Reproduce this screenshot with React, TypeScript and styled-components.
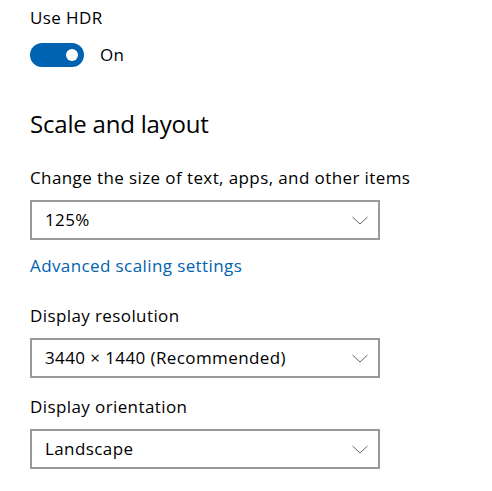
import React from "react";
import styled, { createGlobalStyle } from "styled-components";

const Global = createGlobalStyle`
  html, body { margin: 0; padding: 0; background: #ffffff; }
  body { font-family: "Open Sans", "Noto Sans", sans-serif; color: #000; }
`;

const Page = styled.div`
  display: flex;
  flex-direction: column;
  align-items: flex-start;
  padding: 8px 0 0 30px;
  width: 492px;
  height: 491px;
  box-sizing: border-box;
  overflow: hidden;
`;

const Label = styled.div<{ $mt?: number }>`
  font-size: 17px;
  letter-spacing: 0.4px;
  line-height: 20px;
  margin-top: ${(p) => p.$mt ?? 0}px;
  white-space: nowrap;
`;

const Heading = styled.h2<{ $mt?: number }>`
  margin: ${(p) => p.$mt ?? 0}px 0 0 0;
  font-size: 24px;
  letter-spacing: -0.2px;
  font-weight: 400;
  line-height: 32px;
`;

const ToggleRow = styled.div<{ $mt?: number }>`
  display: flex;
  align-items: center;
  gap: 16px;
  margin-top: ${(p) => p.$mt ?? 0}px;
  height: 24px;
`;

const Track = styled.div<{ $on: boolean }>`
  width: 54px;
  height: 24px;
  border-radius: 12px;
  background: ${(p) => (p.$on ? "#0063b1" : "#fff")};
  display: flex;
  align-items: center;
  justify-content: ${(p) => (p.$on ? "flex-end" : "flex-start")};
  padding: 0 6px;
  box-sizing: border-box;
`;

const Knob = styled.div`
  width: 12px;
  height: 12px;
  border-radius: 50%;
  background: #fff;
`;

const ToggleText = styled.span`
  font-size: 17px;
  letter-spacing: 0.4px;
  line-height: 20px;
`;

const SelectBox = styled.div<{ $mt?: number }>`
  margin-top: ${(p) => p.$mt ?? 0}px;
  width: 350px;
  height: 40px;
  box-sizing: border-box;
  border: 2px solid #999999;
  display: flex;
  align-items: center;
  justify-content: space-between;
  padding: 0 10px 0 13px;
  font-size: 17px;
  letter-spacing: 0.4px;
  line-height: 20px;
`;

const Link = styled.a<{ $mt?: number }>`
  margin-top: ${(p) => p.$mt ?? 0}px;
  font-size: 17px;
  letter-spacing: 0.4px;
  line-height: 20px;
  color: #0063b1;
  text-decoration: none;
`;

const Chevron = () => (
  <svg width="16" height="9" viewBox="0 0 16 9" aria-hidden>
    <path d="M0.5 1 L8 8 L15.5 1" fill="none" stroke="#666" strokeWidth="1" />
  </svg>
);

const Select = ({ value, mt }: { value: string; mt: number }) => (
  <SelectBox $mt={mt}>
    <span>{value}</span>
    <Chevron />
  </SelectBox>
);

export default function App() {
  return (
    <>
      <Global />
      <Page>
        <Label>Use HDR</Label>
        <ToggleRow $mt={15}>
          <Track $on>
            <Knob />
          </Track>
          <ToggleText>On</ToggleText>
        </ToggleRow>
        <Heading $mt={41}>Scale and layout</Heading>
        <Label $mt={28}>Change the size of text, apps, and other items</Label>
        <Select value="125%" mt={12} />
        <Link $mt={16}>Advanced scaling settings</Link>
        <Label $mt={30}>Display resolution</Label>
        <Select value="3440 × 1440 (Recommended)" mt={12} />
        <Label $mt={19}>Display orientation</Label>
        <Select value="Landscape" mt={12} />
      </Page>
    </>
  );
}
